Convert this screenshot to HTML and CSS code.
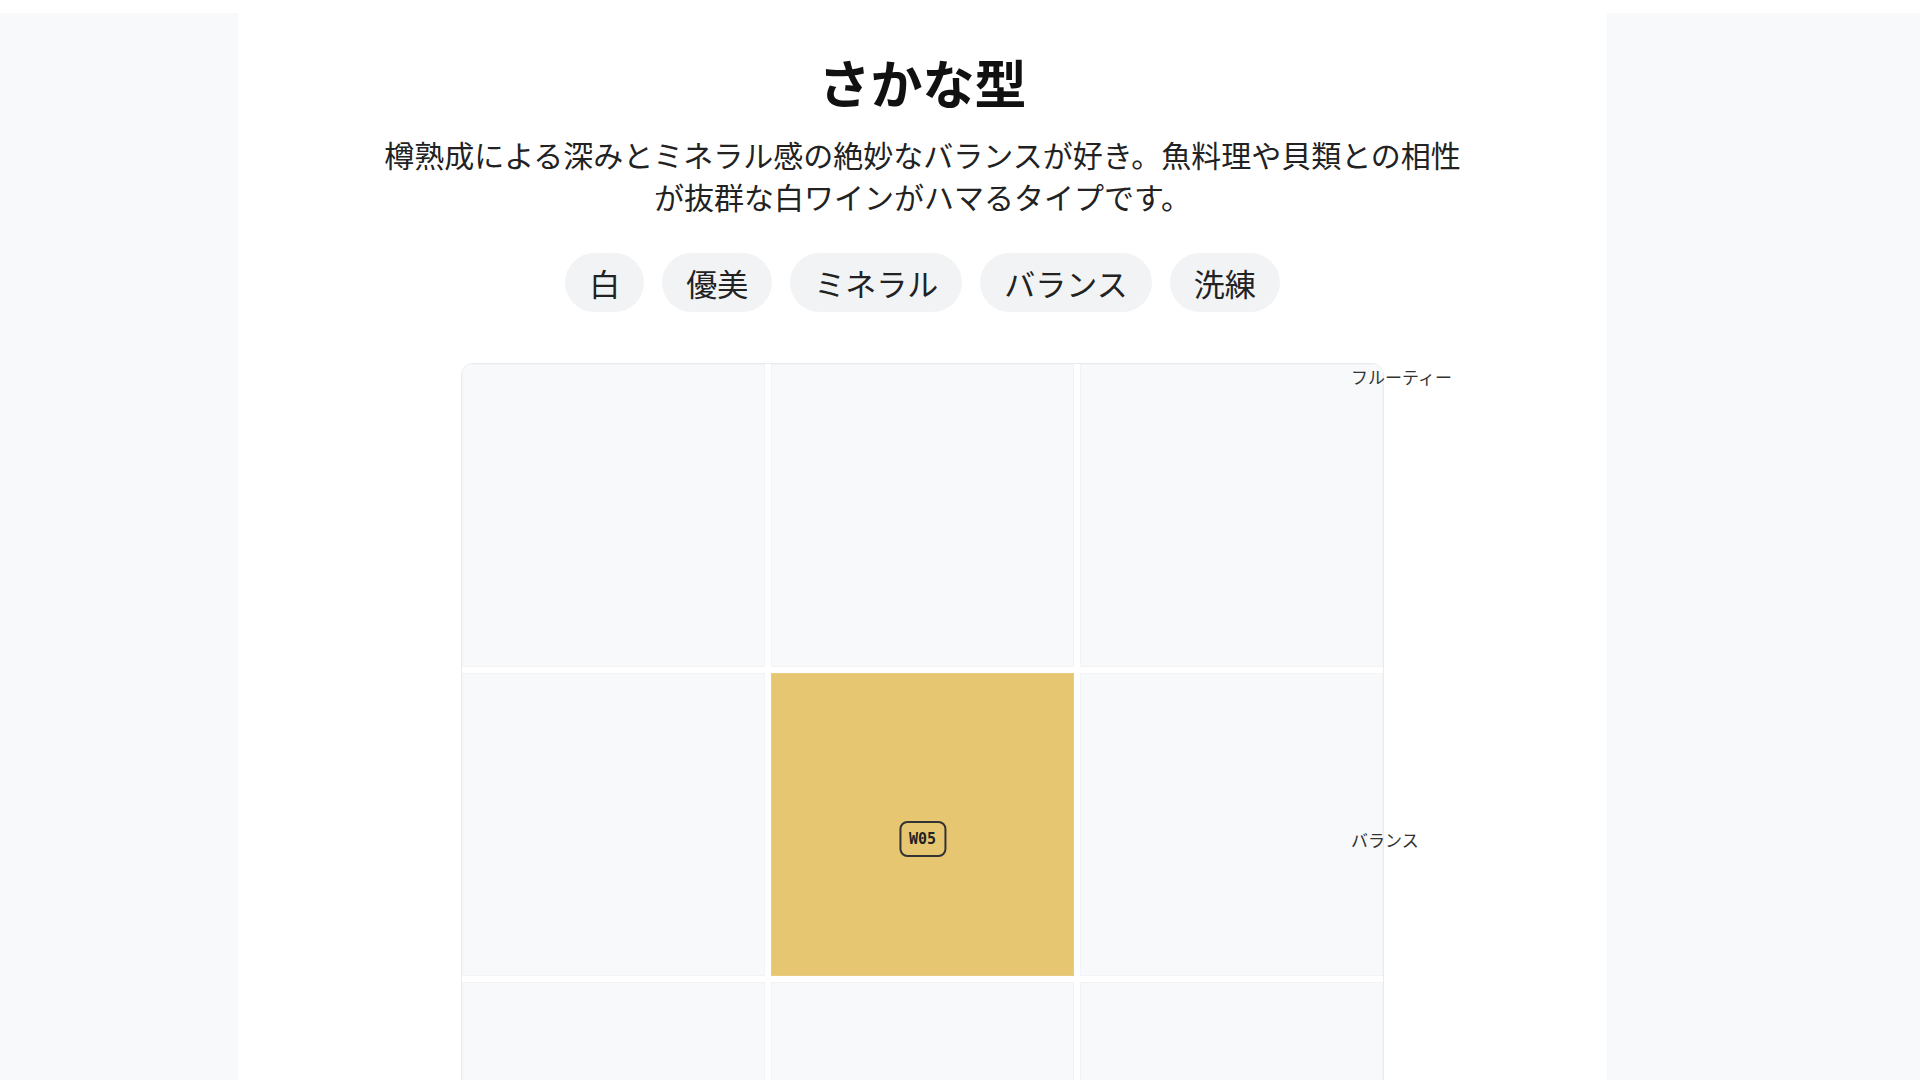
FILE: index.html
```html
<!DOCTYPE html>
<html lang="ja">
<head>
  <meta charset="UTF-8" />
  <meta name="viewport" content="width=device-width, initial-scale=1.0" />
  <title>さかな型</title>
  <link rel="stylesheet" href="styles.css">
</head>
<body>

<div class="page">
  <aside class="side side-left"></aside>

  <main class="result">
    <h1 class="result-title">さかな型</h1>
    <p class="result-desc">樽熟成による深みとミネラル感の絶妙なバランスが好き。魚料理や貝類との相性が抜群な白ワインがハマるタイプです。</p>

    <div class="tags">
      <span class="tag">白</span>
      <span class="tag">優美</span>
      <span class="tag">ミネラル</span>
      <span class="tag">バランス</span>
      <span class="tag">洗練</span>
    </div>

    <div class="map">
      <div class="map-grid">
        <div class="cell"></div>
        <div class="cell"></div>
        <div class="cell"></div>
        <div class="cell"></div>
        <div class="cell cell-active"></div>
        <div class="cell"></div>
        <div class="cell"></div>
        <div class="cell"></div>
        <div class="cell"></div>
      </div>

      <span class="axis axis-top">フルーティー</span>
      <span class="axis axis-mid">バランス</span>
      <span class="pin">W05</span>
    </div>
  </main>

  <aside class="side side-right"></aside>
</div>

</body>
</html>
```

FILE: styles.css
```css
* {
  box-sizing: border-box;
}

html, body {
  margin: 0;
  padding: 0;
  background: #fff;
  color: #222;
  font-family: "Noto Sans CJK JP", "Noto Sans", sans-serif;
  overflow: hidden;
}

.page {
  display: flex;
  margin-top: 13px;
  min-height: 1067px;
  background: #f8f9fa;
}

.side-left {
  width: 238px;
  flex-shrink: 0;
}

.side-right {
  flex: 1;
}

.result {
  width: 1369px;
  flex-shrink: 0;
  background: #fff;
  display: flex;
  flex-direction: column;
  align-items: center;
  padding-top: 38px;
}

.result-title {
  margin: 0;
  font-size: 52px;
  line-height: 62px;
  font-weight: 700;
  color: #111;
}

.result-desc {
  margin: 20px 0 0;
  max-width: 1100px;
  font-size: 30px;
  line-height: 42px;
  text-align: center;
}

.tags {
  display: flex;
  gap: 18px;
  margin-top: 36px;
}

.tag {
  background: #f1f3f5;
  border-radius: 999px;
  padding: 8px 24px;
  font-size: 31px;
  line-height: 43px;
  color: #222;
}

.map {
  position: relative;
  width: 923px;
  margin-top: 51px;
}

.map-grid {
  display: grid;
  grid-template-columns: repeat(3, 1fr);
  gap: 6px;
  border: 1px solid #e9ecef;
  border-radius: 12px;
  overflow: hidden;
  background: #fff;
}

.cell {
  aspect-ratio: 1 / 1;
  background: #f8f9fa;
  border: 1px solid #f1f3f5;
}

.cell-active {
  background: #e6c670;
  border-color: #e8cc80;
}

.axis {
  position: absolute;
  left: 890px;
  font-size: 17px;
  line-height: 24px;
  color: #333;
  white-space: nowrap;
}

.axis-top { top: 2px; }
.axis-mid { top: 465px; }

.pin {
  position: absolute;
  left: 50%;
  top: 476px;
  transform: translate(-50%, -50%);
  border: 2px solid #333;
  border-radius: 8px;
  padding: 5px 8px;
  font-family: "DejaVu Sans Mono", monospace;
  font-size: 15px;
  font-weight: 700;
  line-height: 22px;
  color: #222;
}
```
